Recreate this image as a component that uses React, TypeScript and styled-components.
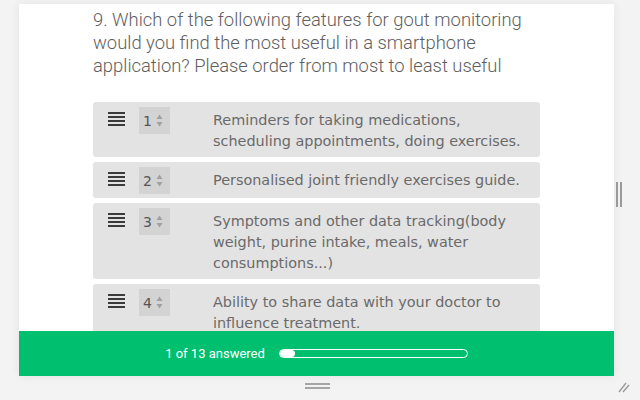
import React from 'react'
import styled, { createGlobalStyle } from 'styled-components'

const GlobalStyle = createGlobalStyle`
  html, body {
    margin: 0;
    padding: 0;
    background: #f3f3f3;
  }
  body {
    width: 640px;
    height: 400px;
    overflow: hidden;
  }
`

const Page = styled.div`
  display: grid;
  grid-template-columns: 19px 595px 26px;
  grid-template-rows: 4px 372px 24px;
  width: 640px;
  height: 400px;
`
const Card = styled.div`
  grid-column: 2;
  grid-row: 2;
  display: flex;
  flex-direction: column;
  background: #fff;
  box-shadow: 0 0 10px rgba(0, 0, 0, 0.07);
  overflow: hidden;
`
const Scroll = styled.div`
  flex: 1;
  overflow: hidden;
  padding: 4px 74px 0 74px;
`
const Question = styled.h2`
  margin: 0 0 25px;
  font-family: Roboto, 'Liberation Sans', sans-serif;
  font-weight: 300;
  font-size: 18.4px;
  line-height: 23px;
  color: #5e5e5e;
`
const List = styled.div`
  display: flex;
  flex-direction: column;
  gap: 5px;
`
const Row = styled.div`
  display: flex;
  align-items: flex-start;
  background: #e3e3e3;
  border-radius: 3px;
  padding: 5px 10px 4px 15px;
`
const Grip = styled.div`
  flex: none;
  display: flex;
  flex-direction: column;
  gap: 2.5px;
  width: 17px;
  margin-top: 5px;
  span {
    height: 1.5px;
    background: #3a3a3a;
  }
`
const RankBox = styled.div`
  flex: none;
  display: flex;
  align-items: center;
  justify-content: space-between;
  margin-left: 14px;
  width: 31px;
  height: 27px;
  box-sizing: border-box;
  padding: 0 7px 0 4px;
  background: #d3d3d3;
  font-family: 'DejaVu Sans', sans-serif;
  font-size: 14px;
  color: #555;
`
const Spinner = styled.svg`
  width: 7px;
  height: 13px;
`
const Label = styled.div`
  margin-left: 43px;
  padding: 3px 0 1px;
  font-family: 'DejaVu Sans', sans-serif;
  font-size: 14.4px;
  line-height: 21px;
  color: #6a6a6a;
`
const Footer = styled.div`
  flex: none;
  display: flex;
  align-items: center;
  justify-content: center;
  gap: 14px;
  height: 45px;
  background: #00bf6f;
`
const Answered = styled.span`
  font-family: Roboto, 'Liberation Sans', sans-serif;
  font-size: 13px;
  color: #fff;
`
const Progress = styled.div`
  width: 189px;
  height: 9px;
  box-sizing: border-box;
  border: 1.5px solid #fff;
  border-radius: 5px;
  overflow: hidden;
`
const ProgressFill = styled.div`
  height: 100%;
  background: #fff;
  border-radius: 4px;
`
const SideHandle = styled.div`
  grid-column: 3;
  grid-row: 2;
  align-self: center;
  justify-self: start;
  display: flex;
  gap: 2px;
  margin-left: 2px;
  margin-top: 8px;
  span {
    width: 2px;
    height: 25px;
    background: #9a9a9a;
  }
`
const BottomHandle = styled.div`
  grid-column: 2;
  grid-row: 3;
  justify-self: center;
  display: flex;
  flex-direction: column;
  gap: 2px;
  margin-top: 7px;
  margin-left: 1px;
  span {
    width: 25px;
    height: 2px;
    background: #a5a5a5;
  }
`
const Resize = styled.svg`
  grid-column: 3;
  grid-row: 3;
  width: 12px;
  height: 12px;
  margin: 5px 0 0 4px;
`

const items = [
  'Reminders for taking medications, scheduling appointments, doing exercises.',
  'Personalised joint friendly exercises guide.',
  'Symptoms and other data tracking(body weight, purine intake, meals, water consumptions...)',
  'Ability to share data with your doctor to influence treatment.',
]

const Arrows = () => (
  <Spinner viewBox="0 0 7 13">
    <path d="M3.5 0.5 L6.5 5 L0.5 5 Z" fill="#a0a0a0" />
    <path d="M3.5 12.5 L6.5 8 L0.5 8 Z" fill="#a0a0a0" />
  </Spinner>
)

export default function App() {
  const answered = 1
  const total = 13
  return (
    <>
      <GlobalStyle />
      <Page>
        <Card>
          <Scroll>
            <Question>
              9. Which of the following features for gout monitoring would you find the most useful in a smartphone
              application? Please order from most to least useful
            </Question>
            <List>
              {items.map((text, i) => (
                <Row key={i}>
                  <Grip>
                    <span />
                    <span />
                    <span />
                    <span />
                  </Grip>
                  <RankBox>
                    {i + 1}
                    <Arrows />
                  </RankBox>
                  <Label>{text}</Label>
                </Row>
              ))}
            </List>
          </Scroll>
          <Footer>
            <Answered>{`${answered} of ${total} answered`}</Answered>
            <Progress>
              <ProgressFill style={{ width: `${Math.max(8, (answered / total) * 100)}%` }} />
            </Progress>
          </Footer>
        </Card>
        <SideHandle>
          <span />
          <span />
        </SideHandle>
        <BottomHandle>
          <span />
          <span />
        </BottomHandle>
        <Resize viewBox="0 0 12 12">
          <path d="M1 11 L8 2 M5 11 L11 4" stroke="#999" strokeWidth="1.3" />
        </Resize>
      </Page>
    </>
  )
}
